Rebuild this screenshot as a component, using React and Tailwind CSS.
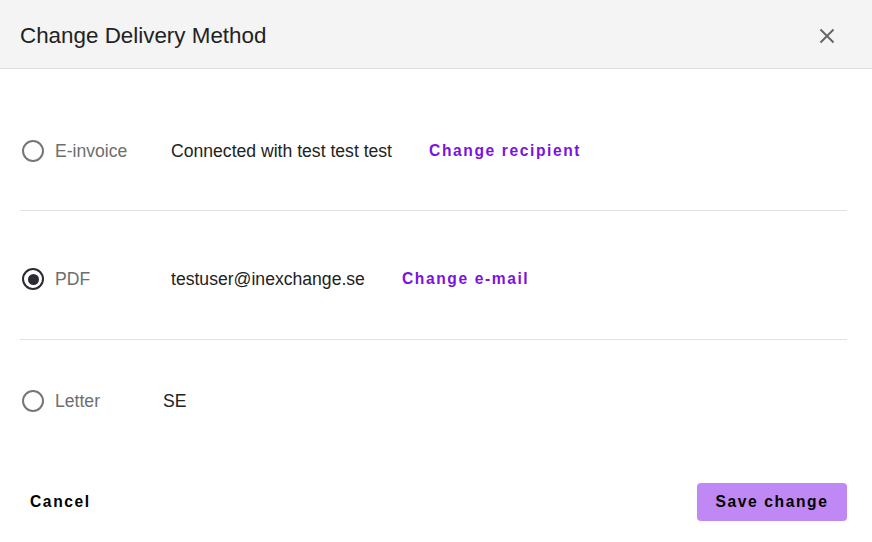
import React from "react";

function Radio({ checked }) {
  return (
    <span
      className={
        "flex h-[22px] w-[22px] shrink-0 items-center justify-center rounded-full border-[2.5px] " +
        (checked ? "border-[#2b2b33]" : "border-[#777777]")
      }
    >
      {checked && <span className="h-[11px] w-[11px] rounded-full bg-[#2b2b33]" />}
    </span>
  );
}

function Row({ checked, label, labelW, value, link }) {
  return (
    <div className="flex h-[24px] items-center pl-[2px]">
      <Radio checked={checked} />
      <span className={"ml-[11px] text-[17.6px] text-[#6e6e6e] " + labelW}>{label}</span>
      <span className="text-[17.6px] text-[#222222]">{value}</span>
      {link && (
        <span className="ml-[37px] text-[15.6px] font-bold tracking-[1.6px] text-[#7b12e2]">{link}</span>
      )}
    </div>
  );
}

export default function App() {
  return (
    <div className="h-[542px] w-[872px] bg-white font-['Liberation_Sans',Arial,sans-serif]">
      <div className="flex h-[69px] items-center justify-between border-b border-[#dddddd] bg-[#f4f4f4] pt-[3px] pl-[20px] pr-[37px]">
        <span className="text-[22.4px] text-[#222222]">Change Delivery Method</span>
        <svg width="16" height="16" viewBox="0 0 16 16" className="mt-[1px]">
          <path d="M1.5 1.5 L14.5 14.5 M14.5 1.5 L1.5 14.5" stroke="#666666" strokeWidth="2" fill="none" />
        </svg>
      </div>
      <div className="pl-[20px] pr-[25px]">
        <div className="border-b border-[#e2e2e2] pt-[70px] pb-[47px]">
          <Row label="E-invoice" labelW="w-[116px]" value="Connected with test test test" link="Change recipient" />
        </div>
        <div className="border-b border-[#e2e2e2] pt-[56px] pb-[48px]">
          <Row checked label="PDF" labelW="w-[116px]" value="testuser@inexchange.se" link="Change e-mail" />
        </div>
        <div className="pt-[49px]">
          <Row label="Letter" labelW="w-[108px]" value="SE" />
        </div>
        <div className="mt-[70px] flex items-center justify-between">
          <button className="px-[10px] text-[15.6px] font-bold tracking-[1.6px] text-black">Cancel</button>
          <button className="flex h-[38px] w-[150px] items-center justify-center rounded-[4px] bg-[#c088f5] text-[15.6px] font-bold tracking-[1.6px] text-black">
            Save change
          </button>
        </div>
      </div>
    </div>
  );
}
